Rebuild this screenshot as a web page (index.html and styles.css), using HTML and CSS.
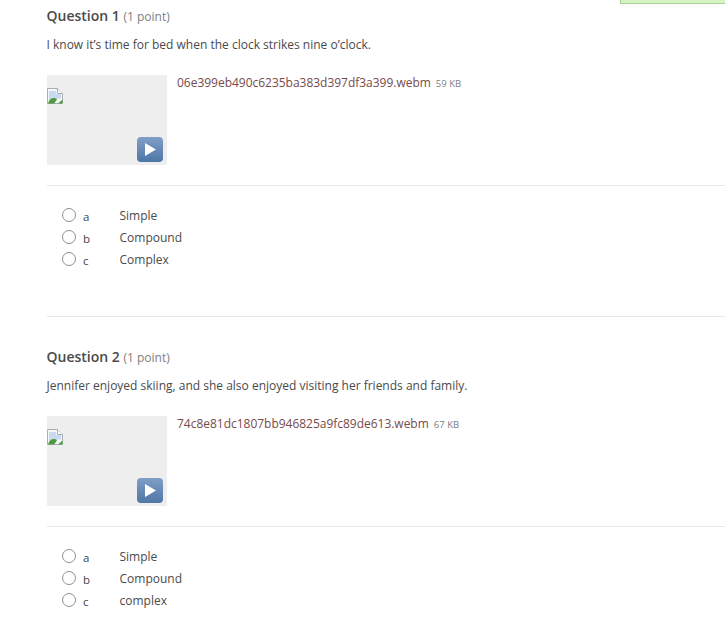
FILE: index.html
```html
<!DOCTYPE html>
<html lang="en">
<head>
<meta charset="utf-8">
<title>Quiz</title>
<link rel="stylesheet" href="styles.css">
</head>
<body>
<div class="notice"></div>
<main class="quiz">
  <section class="question">
    <h2 class="title">Question 1 <span class="points">(1 point)</span></h2>
    <p class="prompt">I know it’s time for bed when the clock strikes nine o’clock.</p>
    <div class="media">
      <div class="thumb">
        <svg class="broken" viewBox="0 0 16 16" width="16" height="16"><path d="M.5.5h10l5 5v10H.5z" fill="#f4f6f8" stroke="#a9aeb4"/><path d="M10.500.5v5h5" fill="#fff" stroke="#a9aeb4"/><path d="M2 3h7v3h5v4L2 13z" fill="#c9d9ef"/><path d="M1 15.500c1-5 6-7 9-4l-3 4z" fill="#4f9a3c"/><path d="M11 15.500l4.500-4v4z" fill="#4f9a3c"/></svg>
        <div class="play"><svg viewBox="0 0 26 25" width="26" height="25"><path d="M8 6v13l11-6.500z" fill="#fff"/></svg></div>
      </div>
      <div class="file"><a class="name">06e399eb490c6235ba383d397df3a399.webm</a><span class="size">59 KB</span></div>
    </div>
    <hr class="rule">
    <div class="options">
      <label class="option"><span class="radio"></span><span class="letter">a</span><span class="text">Simple</span></label>
      <label class="option"><span class="radio"></span><span class="letter">b</span><span class="text">Compound</span></label>
      <label class="option"><span class="radio"></span><span class="letter">c</span><span class="text">Complex</span></label>
    </div>
    <hr class="rule end">
  </section>
  <section class="question">
    <h2 class="title">Question 2 <span class="points">(1 point)</span></h2>
    <p class="prompt">Jennifer enjoyed skiing, and she also enjoyed visiting her friends and family.</p>
    <div class="media">
      <div class="thumb">
        <svg class="broken" viewBox="0 0 16 16" width="16" height="16"><path d="M.5.5h10l5 5v10H.5z" fill="#f4f6f8" stroke="#a9aeb4"/><path d="M10.500.5v5h5" fill="#fff" stroke="#a9aeb4"/><path d="M2 3h7v3h5v4L2 13z" fill="#c9d9ef"/><path d="M1 15.500c1-5 6-7 9-4l-3 4z" fill="#4f9a3c"/><path d="M11 15.500l4.500-4v4z" fill="#4f9a3c"/></svg>
        <div class="play"><svg viewBox="0 0 26 25" width="26" height="25"><path d="M8 6v13l11-6.500z" fill="#fff"/></svg></div>
      </div>
      <div class="file"><a class="name">74c8e81dc1807bb946825a9fc89de613.webm</a><span class="size">67 KB</span></div>
    </div>
    <hr class="rule">
    <div class="options">
      <label class="option"><span class="radio"></span><span class="letter">a</span><span class="text">Simple</span></label>
      <label class="option"><span class="radio"></span><span class="letter">b</span><span class="text">Compound</span></label>
      <label class="option"><span class="radio"></span><span class="letter">c</span><span class="text">complex</span></label>
    </div>
  </section>
</main>
</body>
</html>
```

FILE: styles.css
```css
html, body {
  margin: 0;
  background: #fff;
}
body {
  font-family: "Open Sans", sans-serif;
  font-size: 12px;
  color: #444;
  position: relative;
  overflow-x: hidden;
}
.notice {
  position: absolute;
  top: 0;
  left: 620px;
  width: 105px;
  height: 4px;
  box-sizing: border-box;
  background: #d6f5c6;
  border-left: 1px solid #a9cf93;
  border-bottom: 1px solid #a9cf93;
}
.quiz {
  padding: 6px 0 0 47px;
}
.title {
  margin: 0 0 0 -0.5px;
  font-size: 14px;
  line-height: 20px;
  font-weight: 600;
  color: #4a4a4a;
}
.points {
  font-size: 12px;
  font-weight: 400;
  color: #808080;
}
.prompt {
  margin: 8px 0 0 -0.5px;
  line-height: 20px;
  color: #4a4a4a;
}
.media {
  display: flex;
  margin-top: 20px;
}
.thumb {
  width: 120px;
  height: 90px;
  background: #eee;
  position: relative;
}
.broken {
  display: block;
  position: absolute;
  left: 0;
  top: 13px;
}
.play {
  position: absolute;
  right: 4px;
  bottom: 3px;
  width: 26px;
  height: 25px;
  border-radius: 4px;
  background: linear-gradient(#7f9fc6, #4f76a6);
}
.play svg {
  display: block;
}
.file {
  margin: 0 0 0 10px;
  line-height: 16px;
}
.name {
  color: #784a4a;
  letter-spacing: -0.02px;
}
.size {
  margin-left: 5px;
  font-size: 9.5px;
  color: #808080;
}
.rule {
  margin: 20px 0 0;
  border: 0;
  border-top: 1px solid #e8e8e8;
}
.rule.end {
  margin: 45px 0 30px;
}
.options {
  padding: 19px 0 0 15px;
}
.option {
  display: flex;
  height: 22px;
  line-height: 22px;
}
.radio {
  width: 14px;
  height: 14px;
  box-sizing: border-box;
  margin-top: 3px;
  border: 1px solid #8f8f8f;
  border-radius: 50%;
  background: #fff;
}
.letter {
  width: 36.5px;
  margin-left: 7px;
  font-size: 11.5px;
  padding-top: 1px;
}
.text {
  font-size: 12px;
  color: #4a4a4a;
}
```
